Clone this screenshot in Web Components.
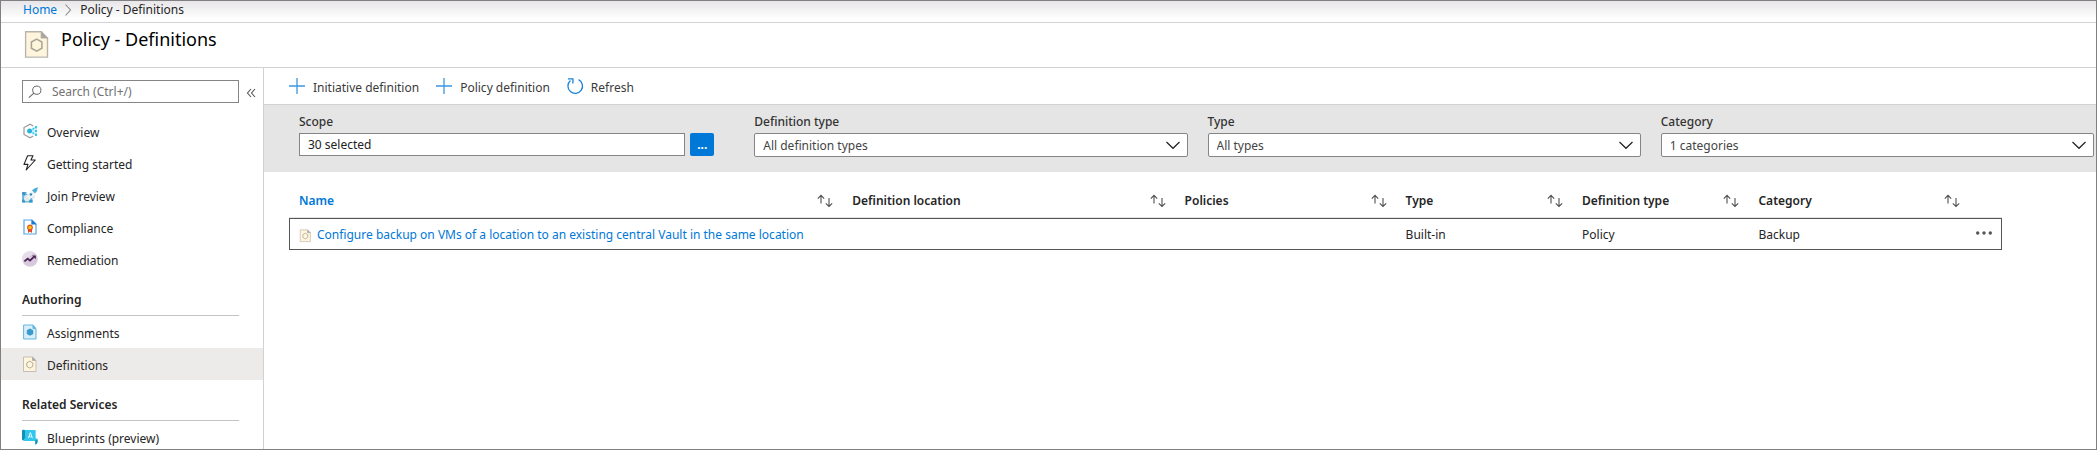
<!DOCTYPE html>
<html lang="en">
<head>
<meta charset="utf-8">
<meta name="viewport" content="width=device-width, initial-scale=1">
<title>Policy - Definitions</title>
<style>
  html, body { margin: 0; height: 100%; }
  body {
    font: 12px/16px "Noto Sans", "Open Sans", sans-serif;
    color: #252525;
    background: #fff;
    --accent: #0078d7;
    --line: #d2d2d2;
    --control-line: #858585;
  }
</style>
</head>
<body>
<policy-app></policy-app>

<script>
const ICONS = {
  definition: `<path d="M2 1H11L14 4V15H2Z" fill="#fff5dc"/><path d="M1.5 1H10.500V4.500H14V15.500H1.500Z" fill="none" stroke="#b9b3aa" stroke-width=".8"/><path d="M10.500 .6 14.400 4.500H10.500Z" fill="#a9a5a0"/><path d="M7.800 5.200 10.800 6.900V10.400L7.800 12.100 4.800 10.400V6.900Z" fill="none" stroke="#aaa596" stroke-width=".9"/>`,
  overview: `<path d="M11.2 3 8 1.2 2 4.6V11.4L8 14.8 11.2 13" fill="none" stroke="#9a9a9a" stroke-width="1.2"/><circle cx="7.600" cy="8" r="2.500" fill="#2ab4dd"/><path d="M10 6.8 14 4M10 8H14M10 9.200 14 12" stroke="#8fdcf2"/><g fill="#32c8ee"><path d="M13 3h2v2.400h-2zM13 6.800h2v2.400h-2zM13 10.600h2v2.400h-2zM10.500 4.800h1.800v1.800h-1.800zM10.500 9.400h1.800v1.800h-1.800z"/></g>`,
  bolt: `<path d="M5.6.7H11L8.900 5H13.300L4.200 15 6 9.400H2Z" fill="#fff" stroke="#222" stroke-width="1.1" stroke-linejoin="round"/>`,
  rocket: `<path d="M.2 5H4.500V7H8V11H10.500V15.500H.2Z" fill="#62b3da"/><path d="M.2 5H3V8H.2ZM.2 12.500H3V15.500H.2ZM7 13H10.500V15.500H7Z" fill="#3b97c8"/><circle cx="5" cy="11.200" r="3.100" fill="#e3eaee"/><path d="M4 8.600 10.500 3.200 13 5.800 7.800 12.400Z" fill="#eef1f3"/><path d="M10 3.200Q12.600.6 16 .2 15.700 3.800 13 6.400Z" fill="#4eadd8"/><circle cx="8.900" cy="7.400" r="1.200" fill="#2688ba"/><path d="M10.500 9.600 13 7.600 12.400 11 9.800 12.600Z" fill="#dfe6ea"/>`,
  compliance: `<path d="M2 1H10L14 5V15H2Z" fill="#fff" stroke="#56a5e8" stroke-width="1.200"/><path d="M9.400.4 14.600 5.600H9.400Z" fill="#1579cf"/><path d="M6 9H10V14L8 12.600 6 14Z" fill="#d8412f"/><circle cx="8" cy="8.400" r="2.900" fill="#e4572b"/><circle cx="8" cy="8.400" r="1.700" fill="#ffca00"/>`,
  remediation: `<circle cx="8" cy="8" r="7.800" fill="#d8c9df"/><path d="M8 .2A7.800 7.800 0 0 0 .6 10.600L12.400 1.600A7.800 7.800 0 0 0 8 .2Z" fill="#e7deeb"/><path d="M2.400 10.400 5.600 7.600 8 9.600 11.600 6.200" fill="none" stroke="#46204f" stroke-width="1.800"/><path d="M10 4.400H13.800V8.200Z" fill="#46204f"/>`,
  assignment: `<path d="M1.600 1H11V4.600H14V15H1.600Z" fill="#d8eef8" stroke="#62b5da"/><path d="M11 .6 14.400 4.200H11Z" fill="#62b5da"/><path d="M8 4.600 11.200 6.300V10L8 11.800 4.800 10V6.300Z" fill="#3b9acb"/>`,
  blueprint: `<path d="M0 1.600C0 .6 3 .6 3 1.600V11.400H1.400Q0 11.400 0 10Z" fill="#1290b5"/><path d="M3 1H13.600V11.400H3Z" fill="#32c6ee"/><path d="M2 9.400H15.400V13.200Q15.400 15.400 13.200 15.400V12H2Z" fill="#32c6ee"/><path d="M13.400 11V15.400Q15.600 15 15.600 12.600V10.400Z" fill="#1290b5"/><path d="M6.400 9.200 8.400 3.600 10.400 9.200M7 7.400Q8.400 8.400 9.800 7.400" fill="none" stroke="#fff" stroke-width=".9"/>`,
  plus: `<path d="M8 0V16M0 8H16" stroke="#3c97df" stroke-width="1.300"/>`,
  refresh: `<path d="M3.400 2.600A7.300 7.300 0 1 0 11.600 1.600" fill="none" stroke="#1a83da" stroke-width="1.300"/><path d="M1 .9H5.900V5.600" fill="none" stroke="#1a83da" stroke-width="1.300"/>`,
  search: `<circle cx="8.800" cy="6.200" r="4.100" fill="none" stroke="#666" stroke-width="1"/><path d="M5.900 9.200 .8 13.600" stroke="#666" stroke-width="1.100"/>`,
  collapse: `<path d="M8 4 4.500 8 8 12M12 4 8.500 8 12 12" fill="none" stroke="#555" stroke-width="1.100"/>`,
  crumb: `<path d="M5.500 2.500 10.500 8 5.500 13.500" fill="none" stroke="#888" stroke-width="1.100"/>`,
  chevron: `<path d="M1.500 5 8 11.300 14.500 5" fill="none" stroke="#222" stroke-width="1.200"/>`,
  sort: `<path d="M4 10.500V2.500M.8 5.600 4 2.400 7.200 5.600M12 5V13.500M8.800 10.300 12 13.500 15.200 10.300" fill="none" stroke="#505050" stroke-width="1.100"/>`,
  dots: `<g fill="#555"><circle cx="1.700" cy="8" r="1.700"/><circle cx="8" cy="8" r="1.700"/><circle cx="14.300" cy="8" r="1.700"/></g>`
};

function define(name, html, setup) {
  const template = document.createElement("template");
  template.innerHTML = html;
  customElements.define(name, class extends HTMLElement {
    constructor() {
      super();
      this.attachShadow({ mode: "open" });
    }
    connectedCallback() {
      if (this.shadowRoot.childNodes.length) return;
      this.shadowRoot.append(template.content.cloneNode(true));
      if (setup) setup(this, this.shadowRoot);
    }
  });
}

define("ui-icon", `
  <style>
    :host { display: block; flex: none; width: 16px; height: 16px; }
    svg { display: block; width: 100%; height: 100%; overflow: visible; }
  </style>
  <svg viewBox="0 0 16 16" aria-hidden="true"></svg>`,
  (host, root) => { root.querySelector("svg").innerHTML = ICONS[host.getAttribute("name")] || ""; });

define("crumb-trail", `
  <style>
    :host { display: block; border-bottom: 1px solid var(--line); background: linear-gradient(#e8e6e8, #fff 18px); }
    nav { display: flex; align-items: center; height: 21px; padding: 0 22px 4px; box-sizing: border-box; }
    a { color: var(--accent); text-decoration: none; }
    ui-icon { margin: 0 4px 0 3px; }
  </style>
  <nav aria-label="Breadcrumb">
    <a href="#home">Home</a><ui-icon name="crumb"></ui-icon><span>Policy - Definitions</span>
  </nav>`);

define("page-title", `
  <style>
    :host { display: flex; gap: 10px; height: 44px; padding-left: 22px; border-bottom: 1px solid var(--line); }
    ui-icon { width: 28px; height: 28px; margin-top: 7px; }
    h1 { margin: 4px 0 0; font-size: 18px; line-height: 24px; font-weight: 400; color: #000; }
  </style>
  <ui-icon name="definition"></ui-icon>
  <h1><slot></slot></h1>`);

define("nav-item", `
  <style>
    :host { display: block; }
    a { display: flex; align-items: center; gap: 9px; height: 32px; padding-left: 21px; color: inherit; text-decoration: none; }
    :host([selected]) a { background: #edebe9; }
    span { padding-top: 4px; }
  </style>
  <a href="#"><span><slot></slot></span></a>`,
  (host, root) => {
    const link = root.querySelector("a");
    const icon = document.createElement("ui-icon");
    icon.setAttribute("name", host.getAttribute("icon"));
    link.prepend(icon);
    if (host.hasAttribute("selected")) link.setAttribute("aria-current", "page");
  });

define("nav-group", `
  <style>
    :host { display: block; }
    h2 { margin: 0 24px 0 21px; padding: 17px 0 7px; border-bottom: 1px solid #c4c4c4; font-size: 12px; line-height: 16px; font-weight: 600; }
  </style>
  <h2></h2><slot></slot>`,
  (host, root) => { root.querySelector("h2").textContent = host.getAttribute("heading"); });

define("side-nav", `
  <style>
    :host { display: block; width: 262px; flex: none; border-right: 1px solid var(--line); overflow: hidden; }
    .search { display: flex; align-items: center; padding: 12px 4px 12px 21px; }
    .box { display: flex; align-items: center; flex: 1; gap: 8px; height: 23px; padding-left: 5px; box-sizing: border-box; border: 1px solid var(--control-line); }
    input { flex: 1; min-width: 0; border: 0; padding: 0; outline: 0; background: none; font: inherit; color: inherit; }
    input::placeholder { color: #727272; opacity: 1; }
    button { border: 0; padding: 2px 0 0; margin-left: 4px; background: none; }
  </style>
  <div class="search">
    <label class="box"><ui-icon name="search"></ui-icon><input type="text" aria-label="Search" placeholder="Search (Ctrl+/)"></label>
    <button type="button" aria-label="Collapse menu"><ui-icon name="collapse"></ui-icon></button>
  </div>
  <nav aria-label="Policy">
    <nav-item icon="overview">Overview</nav-item>
    <nav-item icon="bolt">Getting started</nav-item>
    <nav-item icon="rocket">Join Preview</nav-item>
    <nav-item icon="compliance">Compliance</nav-item>
    <nav-item icon="remediation">Remediation</nav-item>
    <nav-group heading="Authoring">
      <nav-item icon="assignment">Assignments</nav-item>
      <nav-item icon="definition" selected>Definitions</nav-item>
    </nav-group>
    <nav-group heading="Related Services">
      <nav-item icon="blueprint">Blueprints (preview)</nav-item>
    </nav-group>
  </nav>`);

define("command-bar", `
  <style>
    :host { display: flex; align-items: center; gap: 17px; height: 36px; padding-left: 25px; border-bottom: 1px solid var(--line); }
    button { display: flex; align-items: center; gap: 8px; padding: 0; border: 0; background: none; font: inherit; color: #3b3b3b; }
    span { padding-top: 4px; }
  </style>
  <button type="button"><ui-icon name="plus"></ui-icon><span>Initiative definition</span></button>
  <button type="button"><ui-icon name="plus"></ui-icon><span>Policy definition</span></button>
  <button type="button"><ui-icon name="refresh"></ui-icon><span>Refresh</span></button>`);

define("filter-select", `
  <style>
    :host { display: block; }
    label { display: block; height: 19px; color: #333; font-weight: 500; }
    .field { position: relative; }
    select { display: block; width: 100%; height: 24px; box-sizing: border-box; padding: 2px 32px 0 8px; border: 1px solid var(--control-line); border-radius: 2px; background: #fff; appearance: none; font: inherit; color: #444; }
    ui-icon { position: absolute; right: 7px; top: 4px; pointer-events: none; }
  </style>
  <label for="choice"></label>
  <div class="field"><select id="choice"><option></option></select><ui-icon name="chevron"></ui-icon></div>`,
  (host, root) => {
    root.querySelector("label").textContent = host.getAttribute("label");
    root.querySelector("option").textContent = host.getAttribute("value");
  });

define("filter-bar", `
  <style>
    :host { display: grid; grid-template-columns: 435fr 433fr 433fr 433fr; gap: 20px; padding: 9px 2px 15px 35px; background: #e5e5e5; }
    label { display: block; height: 19px; color: #333; font-weight: 500; }
    .scope { display: flex; gap: 5px; padding-right: 20px; }
    input { flex: 1; min-width: 0; height: 23px; box-sizing: border-box; padding: 0 8px; border: 1px solid var(--control-line); background: #fff; font: inherit; color: #222; }
    button { width: 24px; height: 23px; padding: 0; border: 0; border-radius: 2px; background: var(--accent); color: #fff; font: inherit; font-weight: 700; }
  </style>
  <div>
    <label for="scope">Scope</label>
    <div class="scope"><input id="scope" type="text" value="30 selected"><button type="button" aria-label="Choose scope">...</button></div>
  </div>
  <filter-select label="Definition type" value="All definition types"></filter-select>
  <filter-select label="Type" value="All types"></filter-select>
  <filter-select label="Category" value="1 categories"></filter-select>`);

define("definitions-table", `
  <style>
    :host { display: block; padding: 12px 94px 0 25px; }
    table { width: 100%; table-layout: fixed; border-collapse: separate; border-spacing: 0; }
    .c5 { width: 32.3%; } .c3 { width: 19.4%; } .c2 { width: 12.9%; } .c1 { width: 10.3%; }
    th, td { padding: 0 9px 0 10px; text-align: left; }
    th { height: 33px; border-bottom: 1px solid #e5e5e5; font-weight: 600; color: #252525; }
    th div { display: flex; align-items: center; justify-content: space-between; }
    th button { padding: 0; border: 0; background: none; }
    .sorted { color: var(--accent); }
    td { height: 28px; padding-top: 2px; border: solid #555; border-width: 1px 0; }
    td:first-child { border-left-width: 1px; padding-left: 9px; }
    td:last-child { border-right-width: 1px; padding: 0 9px 2px 0; }
    a { display: flex; align-items: center; gap: 5px; color: var(--accent); text-decoration: none; white-space: nowrap; }
    a ui-icon { width: 13px; height: 13px; }
    td button { display: block; margin-left: auto; padding: 0; border: 0; background: none; }
  </style>
  <table>
    <colgroup><col class="c5"><col class="c3"><col class="c2"><col class="c1"><col class="c1"><col class="c2"><col></colgroup>
    <thead><tr></tr></thead>
    <tbody><tr>
      <td><a href="#definition"><ui-icon name="definition"></ui-icon><span>Configure backup on VMs of a location to an existing central Vault in the same location</span></a></td>
      <td></td><td></td><td>Built-in</td><td>Policy</td><td>Backup</td>
      <td><button type="button" aria-label="More"><ui-icon name="dots"></ui-icon></button></td>
    </tr></tbody>
  </table>`,
  (host, root) => {
    const names = ["Name", "Definition location", "Policies", "Type", "Definition type", "Category"];
    root.querySelector("thead tr").innerHTML = names.map((name, i) =>
      `<th scope="col"${i ? "" : ' class="sorted"'}><div><span>${name}</span><button type="button" aria-label="Sort by ${name}"><ui-icon name="sort"></ui-icon></button></div></th>`
    ).join("") + "<th></th>";
  });

define("policy-app", `
  <style>
    :host { display: flex; flex-direction: column; height: 100vh; box-sizing: border-box; border: 1px solid #808080; overflow: hidden; }
    .body { display: flex; flex: 1; min-height: 0; }
    main { flex: 1; min-width: 0; }
  </style>
  <crumb-trail></crumb-trail>
  <page-title>Policy - Definitions</page-title>
  <div class="body">
    <side-nav></side-nav>
    <main>
      <command-bar></command-bar>
      <filter-bar></filter-bar>
      <definitions-table></definitions-table>
    </main>
  </div>`);
</script>
</body>
</html>
